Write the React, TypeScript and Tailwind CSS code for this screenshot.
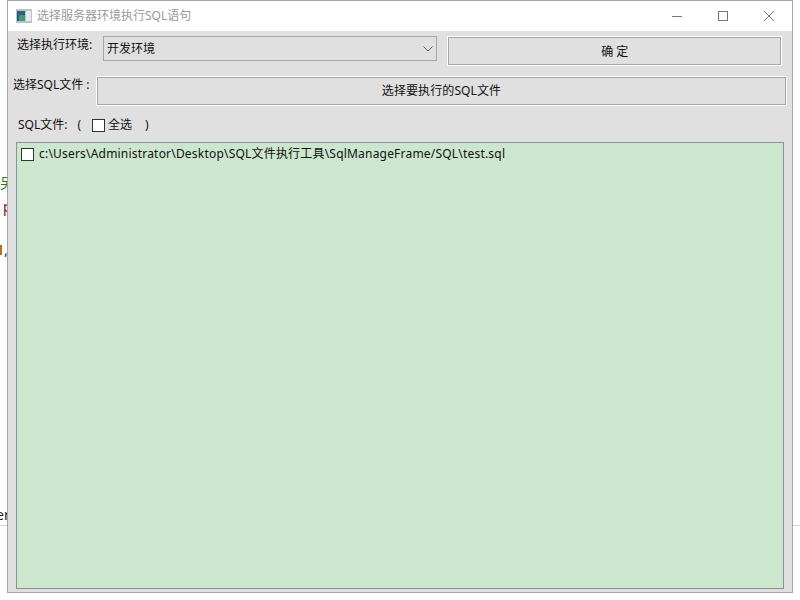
const font = "font-['Noto_Sans','Noto_Sans_CJK_SC',sans-serif]";

const Checkbox = () => (
    <span className="w-[13px] h-[13px] shrink-0 border border-[#333333] bg-white"/>
);

const WindowIcon = () => (
    <svg width="16" height="14" viewBox="0 0 16 14">
        <rect x="0" y="0" width="16" height="14" fill="#b9c4c4"/>
        <rect x="1" y="2" width="8" height="10" fill="#2f5d7e"/>
        <rect x="3" y="6" width="6" height="6" fill="#3f9a78"/>
        <rect x="10" y="2" width="5" height="10" fill="#e6ecec"/>
    </svg>
);

const App = () => {
    return (
        <div className={`${font} relative w-[800px] h-[600px] bg-white overflow-hidden text-[12px] leading-[16px] text-[#111111]`}>
            {/* bits of the editor behind the window */}
            <span className="absolute left-0 top-[174px] text-[14px] leading-[18px] text-[#1a7f1a]">另</span>
            <span className="absolute left-[3px] top-[198px] text-[14px] leading-[18px] text-[#8a1010]">p</span>
            <div className="absolute left-0 top-[245px] w-[2px] h-[10px] bg-[#b5701c]"/>
            <span className="absolute left-[4px] top-[241px] text-[14px] leading-[18px] text-[#1c2a60]">,</span>
            <span className="absolute left-[-4px] top-[506px] text-[14px] leading-[18px] text-[#222222]">er</span>
            <div className="absolute left-0 top-[525px] w-[7px] h-px bg-[#d0d0d0]"/>
            <div className="absolute left-[792px] top-[525px] w-[8px] h-px bg-[#d0d0d0]"/>

            <div className="absolute left-[7px] top-0 w-[786px] h-[593px] flex flex-col border border-t-0 border-[#a6a6a6] bg-[#e0e0e0]">
                <div className="h-[31px] shrink-0 flex items-center bg-white border-t border-[#a6a6a6] pl-[8px]">
                    <WindowIcon/>
                    <span className="ml-[5px] text-[#9a9a9a]">选择服务器环境执行SQL语句</span>
                    <div className="ml-auto flex items-center">
                        <svg width="46" height="30" viewBox="0 0 46 30" className="text-[#777777]">
                            <path d="M18 15.5H28" stroke="currentColor" fill="none"/>
                        </svg>
                        <svg width="46" height="30" viewBox="0 0 46 30" className="text-[#777777]">
                            <rect x="18.5" y="10.5" width="9" height="9" stroke="currentColor" fill="none"/>
                        </svg>
                        <svg width="46" height="30" viewBox="0 0 46 30" className="text-[#777777]">
                            <path d="M18 10L28 20M28 10L18 20" stroke="currentColor" fill="none"/>
                        </svg>
                    </div>
                </div>

                <div className="flex pt-[5px] pl-[9px] pr-[11px]">
                    <span className="w-[86px] mt-[1px] whitespace-nowrap">选择执行环境:</span>
                    <div className="w-[335px] h-[25px] flex items-center justify-between border border-[#a6a6a6] pl-[3px] pr-[2px]">
                        <span>开发环境</span>
                        <svg width="12" height="8" viewBox="0 0 12 8">
                            <path d="M1.5 1.5L6 6L10.5 1.5" stroke="#555555" fill="none"/>
                        </svg>
                    </div>
                    <button className="ml-[11px] w-[333px] h-[28px] mt-[1px] pt-[2px] border border-[#a6a6a6] outline outline-white text-center">确 定</button>
                </div>

                <div className="flex pt-[12px] pl-[5px] pr-[6px]">
                    <span className="w-[84px] whitespace-nowrap">选择SQL文件 :</span>
                    <button className="flex-1 h-[28px] border border-[#a6a6a6] outline outline-white text-center tracking-[0.1px]">选择要执行的SQL文件</button>
                </div>

                <div className="flex items-center pt-[12px] pl-[10px] h-[28px]">
                    <span>SQL文件:</span>
                    <span className="ml-[10px]">(</span>
                    <span className="ml-[11px] flex items-center">
                        <Checkbox/>
                        <span className="ml-[3px]">全选</span>
                    </span>
                    <span className="ml-[13px]">)</span>
                </div>

                <div className="mt-[9px] ml-[8px] w-[768px] flex-1 mb-[3px] border border-[#8a9199] bg-[#cde6ce] pl-[4px] pt-[3px]">
                    <div className="flex items-center">
                        <Checkbox/>
                        <span className="ml-[5px] tracking-[0.2px]">c:\Users\Administrator\Desktop\SQL文件执行工具\SqlManageFrame/SQL\test.sql</span>
                    </div>
                </div>
            </div>
        </div>
    );
};

export default App;
